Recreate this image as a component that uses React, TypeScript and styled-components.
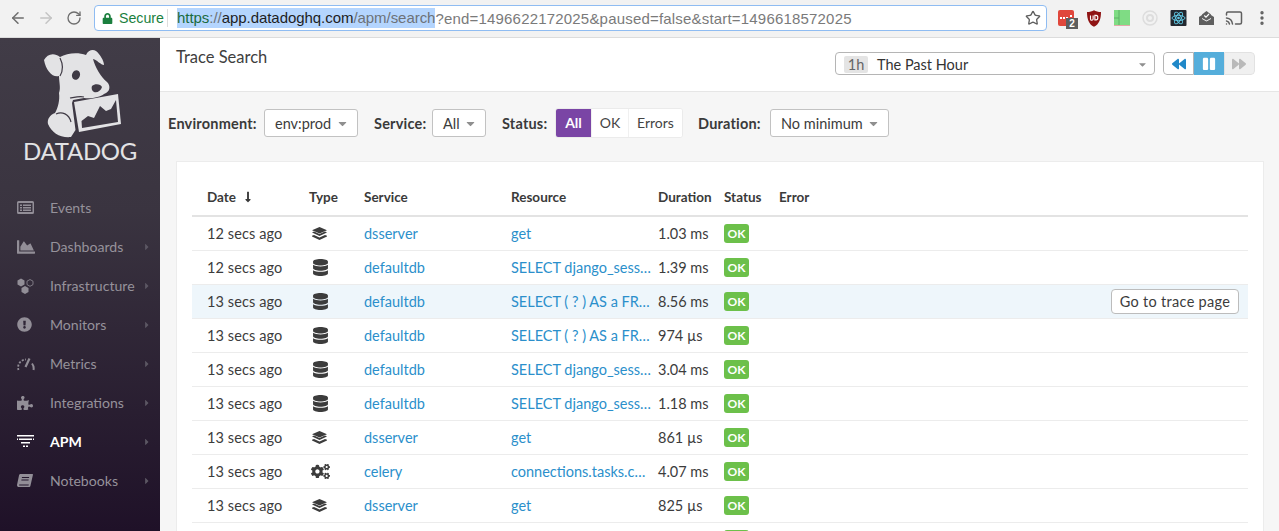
import React, { FC } from 'react'
import styled, { createGlobalStyle } from 'styled-components'
import { ArrowLeft, ArrowRight, RotateCw, Star, Cast, MoreVertical } from 'lucide-react'
import {
  FaLock, FaChartArea, FaExclamationCircle, FaPuzzlePiece, FaDatabase, FaCogs,
  FaLongArrowAltDown, FaCaretRight, FaCaretDown, FaBackward, FaForward, FaPause,
} from 'react-icons/fa'

const Global = createGlobalStyle`
  html, body { margin: 0; padding: 0; background: #fff; }
  * { box-sizing: border-box; }
`

const Page = styled.div`
  width: 1279px;
  height: 531px;
  overflow: hidden;
  display: flex;
  flex-direction: column;
  font-family: Lato, "Open Sans", sans-serif;
  color: #3a3a3a;
`

/* browser chrome */
const Chrome = styled.div`
  height: 38px;
  flex: none;
  display: flex;
  align-items: center;
  padding: 0 0 1px 4px;
  background: #f2f2f2;
  border-bottom: 1px solid #dcdcdc;
`
const NavBtn = styled.div<{ $off?: boolean }>`
  width: 28px;
  display: flex;
  justify-content: center;
  color: ${p => (p.$off ? '#c4c4c4' : '#6e6e6e')};
`
const Omnibox = styled.div`
  width: 953px;
  height: 26px;
  margin-left: 6px;
  display: flex;
  align-items: center;
  background: #fff;
  border: 1.5px solid #8fbcf2;
  border-radius: 4px;
  padding: 0 5px 0 7px;
  font: 15px "Liberation Sans", Arial, sans-serif;
  white-space: nowrap;
`
const Secure = styled.span`
  display: flex;
  align-items: center;
  gap: 6px;
  width: 66px;
  height: 18px;
  margin-right: 9px;
  font-size: 14.2px;
  color: #1b7f3e;
  border-right: 1px solid #dedede;
`
const Selected = styled.span`
  background: #b4d5fe;
  color: #6d7278;
  line-height: 20px;
  letter-spacing: -0.05px;
`
const UrlDark = styled.span<{ $green?: boolean }>`
  color: ${p => (p.$green ? '#1b6b3e' : '#1e1e1e')};
`
const UrlRest = styled.span`
  flex: 1;
  color: #7a7a7a;
  letter-spacing: 0.19px;
`
const Extensions = styled.div`
  display: flex;
  align-items: center;
  margin-left: 5px;
`
const ExtSlot = styled.div`
  position: relative;
  width: 28px;
  height: 20px;
  display: flex;
  align-items: center;
  justify-content: center;
  color: #5f5f5f;
`
const CountBadge = styled.span`
  position: absolute;
  right: 2px;
  bottom: -1px;
  width: 12px;
  height: 11px;
  background: #5e5e5e;
  color: #fff;
  font: bold 10px/11px "Liberation Sans", Arial, sans-serif;
  text-align: center;
`

/* app shell */
const Body = styled.div`
  flex: 1;
  min-height: 0;
  display: flex;
`
const Sidebar = styled.nav`
  width: 160px;
  flex: none;
  background: linear-gradient(#413c47, #3a3440 35%, #1f1128);
`
const Logo = styled.div`
  height: 150px;
  display: flex;
  flex-direction: column;
  align-items: center;
  color: #e3e3e5;
`
const LogoWord = styled.div`
  margin-top: -1px;
  font-size: 24px;
  line-height: 28px;
  letter-spacing: -0.3px;
`
const NavRow = styled.div<{ $active?: boolean }>`
  height: 39px;
  display: flex;
  align-items: center;
  padding: 0 8px 0 17px;
  font-size: 14.1px;
  font-weight: ${p => (p.$active ? 700 : 400)};
  color: ${p => (p.$active ? '#fff' : '#96929b')};
`
const NavIcon = styled.span<{ $active?: boolean }>`
  width: 33px;
  flex: none;
  display: flex;
  align-items: center;
  color: ${p => (p.$active ? '#fff' : '#928e97')};
`
const NavLabel = styled.span`
  flex: 1;
  white-space: nowrap;
`
const NavCaret = styled.span`
  display: flex;
  color: #5c5763;
`

const Main = styled.main`
  flex: 1;
  min-width: 0;
  display: flex;
  flex-direction: column;
  background: #f6f6f6;
`
const Header = styled.header`
  height: 54px;
  flex: none;
  display: flex;
  justify-content: space-between;
  padding: 0 24px 0 16px;
  background: #fff;
  border-bottom: 1px solid #e6e6e6;
`
const Title = styled.h1`
  margin: 9px 0 0;
  font-size: 16.5px;
  line-height: 20px;
  font-weight: 400;
  color: #3e3e3e;
`
const TimeControls = styled.div`
  display: flex;
  gap: 8px;
  margin-top: 14px;
  height: 23px;
`
const TimeSelect = styled.div`
  width: 320px;
  display: flex;
  align-items: center;
  padding: 1px 6px 0 8px;
  background: #fff;
  border: 1px solid #b5b5b5;
  border-radius: 4px;
  font-size: 14.5px;
  color: #333;
`
const RangeTag = styled.span`
  width: 24px;
  height: 17px;
  margin-right: 9px;
  background: #e4e4e4;
  border-radius: 2px;
  color: #666;
  line-height: 17px;
  text-align: center;
`
const TimeText = styled.span`
  flex: 1;
`
const Transport = styled.div`
  display: flex;
  width: 92px;
  border-radius: 4px;
  overflow: hidden;
`
const TransportBtn = styled.div<{ $kind: 'back' | 'pause' | 'next' }>`
  flex: 1;
  display: flex;
  align-items: center;
  justify-content: center;
  font-size: 14px;
  background: ${p => (p.$kind === 'pause' ? '#55aedb' : p.$kind === 'next' ? '#f0f0f0' : '#fff')};
  color: ${p => (p.$kind === 'pause' ? '#fff' : p.$kind === 'next' ? '#b9b9b9' : '#2088c8')};
  border: ${p => (p.$kind === 'pause' ? 'none' : `1px solid ${p.$kind === 'next' ? '#e2e2e2' : '#b5b5b5'}`)};
  border-radius: ${p => (p.$kind === 'back' ? '4px 0 0 4px' : p.$kind === 'next' ? '0 4px 4px 0' : '0')};
`

const Filters = styled.div`
  height: 30px;
  flex: none;
  margin-top: 16px;
  padding-left: 8px;
  display: flex;
  align-items: center;
`
const FilterLabel = styled.label<{ $w: number }>`
  width: ${p => p.$w}px;
  font-size: 14.5px;
  font-weight: 700;
  letter-spacing: 0.2px;
  color: #3a3a3a;
  white-space: nowrap;
`
const Select = styled.div<{ $w: number }>`
  width: ${p => p.$w}px;
  height: 28px;
  margin-right: 16px;
  padding: 0 8px 0 10px;
  display: flex;
  align-items: center;
  justify-content: space-between;
  background: #fff;
  border: 1px solid #c2c2c2;
  border-radius: 3px;
  font-size: 14.5px;
  color: #3c3c3c;
`
const SelectCaret = styled.span`
  display: flex;
  color: #8f8f8f;
`
const Toggle = styled.div`
  display: flex;
  height: 30px;
  margin-right: 15px;
  border-radius: 3px;
  overflow: hidden;
  background: #fff;
  border: 1px solid #ebebeb;
`
const ToggleBtn = styled.div<{ $w: number; $on?: boolean }>`
  width: ${p => p.$w}px;
  text-align: center;
  font-size: 14px;
  line-height: 28px;
  background: ${p => (p.$on ? '#7a45a5' : '#fff')};
  color: ${p => (p.$on ? '#fff' : '#444')};
  font-weight: ${p => (p.$on ? 700 : 400)};
  border-left: ${p => (p.$on ? 'none' : '1px solid #f0f0f0')};
`

const Card = styled.section`
  flex: 1;
  margin: 23px 15px 0 16px;
  padding: 19px 15px 0;
  background: #fff;
  border: 1px solid #ececec;
  border-bottom: none;
  overflow: hidden;
`
const Grid = styled.div<{ $hover?: boolean; $head?: boolean }>`
  position: relative;
  display: grid;
  grid-template-columns: 102px 55px 147px 147px 66px 55px 1fr;
  align-items: center;
  height: ${p => (p.$head ? '36px' : '34px')};
  padding: ${p => (p.$head ? '0 0 3px 15px' : '0 0 0 15px')};
  font-size: 14.5px;
  background: ${p => (p.$hover ? '#eef6fb' : 'transparent')};
  border-bottom: ${p => (p.$head ? '2px solid #e3e3e3' : '1px solid #ececec')};
  white-space: nowrap;
`
const HeadCell = styled.div`
  font-size: 13.5px;
  font-weight: 700;
  color: #3a3a3a;
  display: flex;
  align-items: center;
  gap: 6px;
`
const TimeCell = styled.div`
  color: #3c3c3c;
  letter-spacing: 0.1px;
`
const TypeCell = styled.div`
  display: flex;
  padding-left: 3px;
  color: #3c3c3c;
`
const Link = styled.a`
  display: block;
  color: #2b8fcb;
`
const DurationCell = styled.div`
  color: #3c3c3c;
`
const Ok = styled.span`
  display: block;
  width: 25px;
  height: 19px;
  border-radius: 3px;
  background: #6cc04a;
  color: #fff;
  font-size: 12px;
  font-weight: 700;
  line-height: 19px;
  text-align: center;
`
const TraceButton = styled.button`
  position: absolute;
  right: 9px;
  top: 4px;
  width: 128px;
  height: 25px;
  padding: 0;
  background: #fff;
  border: 1px solid #bcbcbc;
  border-radius: 4px;
  font: 14.5px Lato, sans-serif;
  letter-spacing: 0.3px;
  color: #3c3c3c;
`

/* drawn icons */
const DogLogo: FC = () => (
  <svg width="160" height="100" viewBox="0 0 160 100" fill="currentColor">
    <path d="M44 22C47 16 54 14 60 19C67 15 78 14 86 17C88 12 93 11 96 13C100 16 104 23 104 27C101 27 97 22 93 21C95 29 101 39 107 44C111 48 110 54 104 56C100 59 92 61 84 60L73 62L72 65L75.500 92L71 99C60 100 52 95 48 86C47 81 50 77 55 75C58 70 60 62 59 55C61 50 59 44 59 38C53 40 46 33 44 22Z" />
    <path d="M74 64L118 56L121 86L79 94Z" />
    <path d="M82 90L81.500 83L88 78L94 80L100 68L106 73L111 71L116 62L118 84Z" fill="#3f3a45" />
    <ellipse cx="76" cy="37" rx="4" ry="4.800" fill="#3f3a45" transform="rotate(20 76 37)" />
    <path d="M92 48C95 45 101 46 102 49C101 53 97 55 94 54C92 53 91 50 92 48Z" fill="#3f3a45" />
    <g fill="none" stroke="#3f3a45" strokeWidth="1.200">
      <path d="M70 60C76 59 80 58 84 59" />
      <path d="M60 20C63 26 63 33 60 38" />
      <path d="M56 76C62 73 69 76 71 84" />
    </g>
  </svg>
)

const EventsIcon: FC = () => (
  <svg width="17" height="13" viewBox="0 0 17 13" fill="currentColor">
    <path fillRule="evenodd" d="M0 1.500A1.500 1.500 0 0 1 1.500 0h14A1.500 1.500 0 0 1 17 1.500v10a1.500 1.500 0 0 1-1.500 1.500h-14A1.500 1.500 0 0 1 0 11.500zM1.500 2v9h14V2z" />
    <path d="M3 3.500h2v1.500H3zM6 3.500h8v1.500H6zM3 6h2v1.500H3zM6 6h8v1.500H6zM3 8.500h2V10H3zM6 8.500h8V10H6z" />
  </svg>
)
const HexIcon: FC = () => (
  <svg width="17" height="16" viewBox="0 0 17 16" fill="currentColor">
    <path d="M4 0.500L7.500 2.500V6.500L4 8.500L0.500 6.500V2.500Z" />
    <path d="M8 8L11.500 10V14L8 16L4.500 14V10Z" />
    <path d="M13 1.500L16 3.200V6.600L13 8.300L10 6.600V3.200Z" fill="none" stroke="currentColor" strokeWidth="0.800" />
  </svg>
)
const GaugeIcon: FC = () => (
  <svg width="18" height="14" viewBox="0 0 18 14" fill="none" stroke="currentColor">
    <path d="M1.500 13A8 8 0 0 1 9 2.500" strokeWidth="1.800" strokeDasharray="2 1.500" />
    <path d="M16.500 13A8 8 0 0 0 15 6.500" strokeWidth="2" />
    <path d="M8.500 10L12.500 1.500" strokeWidth="2.200" />
  </svg>
)
const ApmIcon: FC = () => (
  <svg width="17" height="13" viewBox="0 0 17 13" fill="currentColor">
    <path d="M0 0h17v1.500H0zM2 3.500h13V5H2zM0 3.500h1V5H0zM16 3.500h1V5h-1zM4 7h9v1.500H4zM6 10.500h2V12H6zM9 10.500h2V12H9z" />
  </svg>
)
const BookIcon: FC = () => (
  <svg width="16" height="14" viewBox="0 0 16 14" fill="currentColor">
    <path fillRule="evenodd" d="M3.500 0H15.500C16 0 16 .5 15.900 1L13.500 11.500C13.300 12.500 12.800 13 12 13H2C0.500 13 -0.200 12 0.100 10.500L2 1.500C2.200.5 2.700 0 3.500 0ZM5 3L4.800 4H12L12.200 3ZM4.500 5.500L4.300 6.500H11.500L11.700 5.500ZM2.500 10.500C2.200 10.500 2 10.800 2 11.100C2 11.400 2.200 11.500 2.500 11.500H11.600L11.800 10.500Z" />
  </svg>
)
const StackIcon: FC = () => (
  <svg width="15" height="13" viewBox="0 0 15 13" fill="currentColor">
    <path d="M7.500 0L15 3.200L7.500 6.400L0 3.200Z" />
    <path d="M0 5.400L2 4.600L7.500 7L13 4.600L15 5.400L7.500 9Z" />
    <path d="M0 8.800L2 8L7.500 10.400L13 8L15 8.800V9.400L7.500 13L0 9.400Z" />
  </svg>
)

const Redeye: FC = () => (
  <svg width="16" height="16" viewBox="0 0 16 16">
    <rect width="16" height="16" rx="2" fill="#e0473c" />
    <path d="M2 7h2v2H2zM5 7h2v2H5zM8 7h2v2H8zM12 5h2v2h-2z" fill="#fff" />
  </svg>
)
const UBlock: FC = () => (
  <svg width="14" height="17" viewBox="0 0 16 19">
    <path d="M8 0C10 1.500 13 2 16 2C16 10 14 16 8 19C2 16 0 10 0 2C3 2 6 1.500 8 0Z" fill="#8f1414" />
    <path d="M4 6v4c0 2 3 2 3 0V6M9 6h1.500c2.500 0 2.500 5 0 5H9z" fill="none" stroke="#fff" strokeWidth="1.300" />
  </svg>
)
const GreenExt: FC = () => (
  <svg width="16" height="16" viewBox="0 0 16 16">
    <rect width="16" height="16" fill="#7fdc84" />
    <path d="M5 0v16M0 8h5" stroke="#5fb267" strokeWidth="1" />
    <path d="M0 15.500h16" stroke="#e2a9a9" strokeWidth="1" />
  </svg>
)
const RingExt: FC = () => (
  <svg width="16" height="16" viewBox="0 0 16 16" fill="none" stroke="#dddddd">
    <circle cx="8" cy="8" r="7" strokeWidth="1.500" />
    <circle cx="8" cy="8" r="3" strokeWidth="2" />
  </svg>
)
const ReactExt: FC = () => (
  <svg width="17" height="16" viewBox="0 0 16 16">
    <rect width="16" height="16" rx="1" fill="#23282f" />
    <g fill="none" stroke="#61c8e4" strokeWidth="0.900">
      <ellipse cx="8" cy="8" rx="6.500" ry="2.600" />
      <ellipse cx="8" cy="8" rx="6.500" ry="2.600" transform="rotate(60 8 8)" />
      <ellipse cx="8" cy="8" rx="6.500" ry="2.600" transform="rotate(120 8 8)" />
    </g>
    <circle cx="8" cy="8" r="1.300" fill="#61c8e4" />
  </svg>
)
const MailExt: FC = () => (
  <svg width="15" height="15" viewBox="0 0 15 15" fill="#5f5f5f">
    <path d="M0 6L3 4V8L7.500 10.500L12 8V4L15 6V14H0Z" />
    <path d="M7.500 0L12 3.500V7L7.500 9.500L3 7V3.500Z" />
    <path d="M5.300 4.500L7 6.200L10 3" fill="none" stroke="#fff" strokeWidth="1.200" />
  </svg>
)

type NavEntry = { label: string; icon: React.ReactNode; active?: boolean; caret?: boolean }

const navItems: NavEntry[] = [
  { label: 'Events', icon: <EventsIcon /> },
  { label: 'Dashboards', icon: <FaChartArea size={18} />, caret: true },
  { label: 'Infrastructure', icon: <HexIcon />, caret: true },
  { label: 'Monitors', icon: <FaExclamationCircle size={15} />, caret: true },
  { label: 'Metrics', icon: <GaugeIcon />, caret: true },
  { label: 'Integrations', icon: <FaPuzzlePiece size={16} />, caret: true },
  { label: 'APM', icon: <ApmIcon />, active: true, caret: true },
  { label: 'Notebooks', icon: <BookIcon />, caret: true },
]

type Kind = 'stack' | 'db' | 'gears'
type Trace = { date: string; kind: Kind; service: string; resource: string; duration: string; hover?: boolean }

// last row is cut by the window, only the top of its icon and badge shows
const traces: Trace[] = [
  { date: '12 secs ago', kind: 'stack', service: 'dsserver', resource: 'get', duration: '1.03 ms' },
  { date: '12 secs ago', kind: 'db', service: 'defaultdb', resource: 'SELECT django_sess…', duration: '1.39 ms' },
  { date: '13 secs ago', kind: 'db', service: 'defaultdb', resource: 'SELECT ( ? ) AS a FR…', duration: '8.56 ms', hover: true },
  { date: '13 secs ago', kind: 'db', service: 'defaultdb', resource: 'SELECT ( ? ) AS a FR…', duration: '974 µs' },
  { date: '13 secs ago', kind: 'db', service: 'defaultdb', resource: 'SELECT django_sess…', duration: '3.04 ms' },
  { date: '13 secs ago', kind: 'db', service: 'defaultdb', resource: 'SELECT django_sess…', duration: '1.18 ms' },
  { date: '13 secs ago', kind: 'stack', service: 'dsserver', resource: 'get', duration: '861 µs' },
  { date: '13 secs ago', kind: 'gears', service: 'celery', resource: 'connections.tasks.c…', duration: '4.07 ms' },
  { date: '13 secs ago', kind: 'stack', service: 'dsserver', resource: 'get', duration: '825 µs' },
  { date: '', kind: 'db', service: '', resource: '', duration: '' },
]

const TypeIcon: FC<{ kind: Kind }> = ({ kind }) => {
  if (kind === 'stack') return <StackIcon />
  if (kind === 'db') return <FaDatabase size={17} />
  return <FaCogs size={19} style={{ marginLeft: -1 }} />
}

const App: FC = () => (
  <Page>
    <Global />
    <Chrome>
      <NavBtn><ArrowLeft size={18} strokeWidth={2} /></NavBtn>
      <NavBtn $off><ArrowRight size={18} strokeWidth={2} /></NavBtn>
      <NavBtn><RotateCw size={16} strokeWidth={2} /></NavBtn>
      <Omnibox>
        <Secure><FaLock size={11} />Secure</Secure>
        <Selected>
          <UrlDark $green>https</UrlDark>://<UrlDark>app.datadoghq.com</UrlDark>/apm/search
        </Selected>
        <UrlRest>?end=1496622172025&amp;paused=false&amp;start=1496618572025</UrlRest>
        <Star size={16} color="#5f5f5f" />
      </Omnibox>
      <Extensions>
        <ExtSlot><Redeye /><CountBadge>2</CountBadge></ExtSlot>
        <ExtSlot><UBlock /></ExtSlot>
        <ExtSlot><GreenExt /></ExtSlot>
        <ExtSlot><RingExt /></ExtSlot>
        <ExtSlot><ReactExt /></ExtSlot>
        <ExtSlot><MailExt /></ExtSlot>
        <ExtSlot><Cast size={18} /></ExtSlot>
        <ExtSlot><MoreVertical size={18} strokeWidth={2.5} /></ExtSlot>
      </Extensions>
    </Chrome>
    <Body>
      <Sidebar>
        <Logo>
          <DogLogo />
          <LogoWord>DATADOG</LogoWord>
        </Logo>
        {navItems.map(item => (
          <NavRow key={item.label} $active={item.active}>
            <NavIcon $active={item.active}>{item.icon}</NavIcon>
            <NavLabel>{item.label}</NavLabel>
            {item.caret && <NavCaret><FaCaretRight size={10} /></NavCaret>}
          </NavRow>
        ))}
      </Sidebar>
      <Main>
        <Header>
          <Title>Trace Search</Title>
          <TimeControls>
            <TimeSelect>
              <RangeTag>1h</RangeTag>
              <TimeText>The Past Hour</TimeText>
              <SelectCaret><FaCaretDown size={11} /></SelectCaret>
            </TimeSelect>
            <Transport>
              <TransportBtn $kind="back"><FaBackward /></TransportBtn>
              <TransportBtn $kind="pause"><FaPause /></TransportBtn>
              <TransportBtn $kind="next"><FaForward /></TransportBtn>
            </Transport>
          </TimeControls>
        </Header>
        <Filters>
          <FilterLabel $w={96}>Environment:</FilterLabel>
          <Select $w={94}>env:prod<SelectCaret><FaCaretDown size={13} /></SelectCaret></Select>
          <FilterLabel $w={58}>Service:</FilterLabel>
          <Select $w={54}>All<SelectCaret><FaCaretDown size={13} /></SelectCaret></Select>
          <FilterLabel $w={53}>Status:</FilterLabel>
          <Toggle>
            <ToggleBtn $w={35} $on>All</ToggleBtn>
            <ToggleBtn $w={37}>OK</ToggleBtn>
            <ToggleBtn $w={54}>Errors</ToggleBtn>
          </Toggle>
          <FilterLabel $w={72}>Duration:</FilterLabel>
          <Select $w={119}>No minimum<SelectCaret><FaCaretDown size={13} /></SelectCaret></Select>
        </Filters>
        <Card>
          <Grid $head>
            <HeadCell>Date <FaLongArrowAltDown size={12} /></HeadCell>
            <HeadCell>Type</HeadCell>
            <HeadCell>Service</HeadCell>
            <HeadCell>Resource</HeadCell>
            <HeadCell>Duration</HeadCell>
            <HeadCell>Status</HeadCell>
            <HeadCell>Error</HeadCell>
          </Grid>
          {traces.map((t, i) => (
            <Grid key={i} $hover={t.hover}>
              <TimeCell>{t.date}</TimeCell>
              <TypeCell><TypeIcon kind={t.kind} /></TypeCell>
              <Link>{t.service}</Link>
              <Link>{t.resource}</Link>
              <DurationCell>{t.duration}</DurationCell>
              <div><Ok>{t.date && 'OK'}</Ok></div>
              <div />
              {t.hover && <TraceButton>Go to trace page</TraceButton>}
            </Grid>
          ))}
        </Card>
      </Main>
    </Body>
  </Page>
)

export default App
